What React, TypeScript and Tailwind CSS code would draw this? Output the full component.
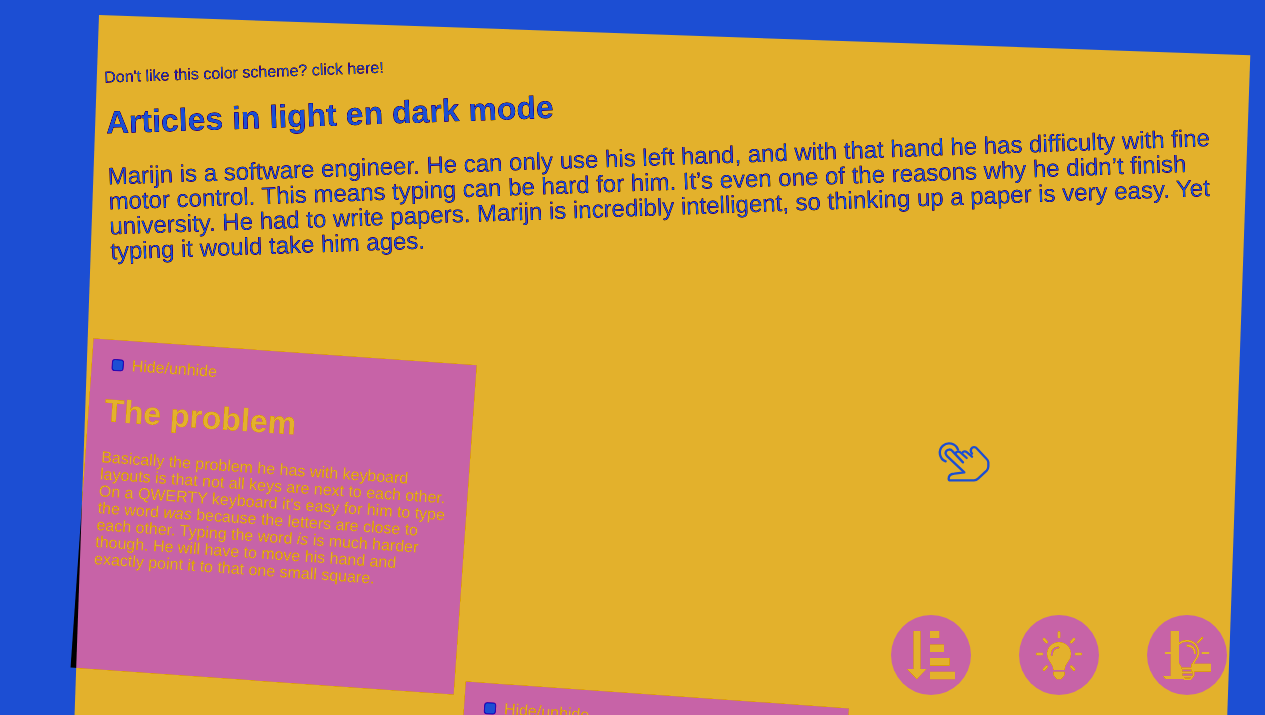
import type { ReactNode } from "react";

function ArticleCard({ title, children, className }: { title: string; children: ReactNode; className: string }) {
  return (
    <article className={`rotate-2 bg-[#1c4ed3] p-4 text-base leading-[17px] text-black mix-blend-difference ${className}`}>
      <label className="flex items-center gap-2 pl-1">
        <input
          type="checkbox"
          className="size-3 appearance-none rounded-[3px] border border-[#bbbbdd] bg-white"
        />
        Hide/unhide
      </label>
      <h2 className="my-[21px] text-[32px] leading-[34px] font-bold">{title}</h2>
      <p>{children}</p>
    </article>
  );
}

function RoundButton({ label, children }: { label: string; children: ReactNode }) {
  return (
    <button type="button" aria-label={label} className="size-20 rounded-full bg-[#1c4ed3] text-black">
      <svg viewBox="0 0 80 80" className="size-full" fill="currentColor" stroke="none">
        {children}
      </svg>
    </button>
  );
}

function HandPointer() {
  return (
    <svg
      viewBox="0 0 270 210"
      className="pointer-events-none fixed top-[430px] left-[920px] h-[70px] w-[90px] text-white mix-blend-difference"
      fill="none"
      stroke="currentColor"
      strokeWidth="7"
      strokeLinecap="round"
      strokeLinejoin="round"
      aria-hidden="true"
    >
      <path d="M77 94A28 28 0 1 1 114 59" />
      <path d="M129 97L98 64C91 56 83 58 79 63C75 68 77 74 82 79L133 127L103 131C91 132 86 138 86 146C86 149 88 151 92 151H162C168 151 171 149 175 145L200 122C204 118 205 114 205 109V97C205 93 203 90 200 87L172 57C166 50 158 50 154 56C151 61 152 66 156 71" />
      <path d="M106 71C109 64 117 63 122 68L140 84" />
      <path d="M127 69C129 63 136 63 141 67L156 80" />
    </svg>
  );
}

export default function App() {
  return (
    <div className="isolate h-screen overflow-hidden bg-[#1c4ed3] pt-[15px] pr-[14px] pl-[99px] font-['Liberation_Sans',Arial,sans-serif]">
      <main className="grid origin-top-left rotate-2 auto-rows-[330px] grid-cols-3 bg-white mix-blend-difference">
        <header className="col-span-3 -rotate-4 px-4 pt-[14px] text-black">
          <a href="#scheme" className="block text-base leading-[17px]">
            Don't like this color scheme? click here!
          </a>
          <h1 className="mt-5 mb-6 text-[32px] leading-[34px] font-bold">Articles in light en dark mode</h1>
          <p className="text-2xl leading-[25px]">
            Marijn is a software engineer. He can only use his left hand, and with that hand he has difficulty with
            fine motor control. This means typing can be hard for him. It’s even one of the reasons why he didn’t
            finish university. He had to write papers. Marijn is incredibly intelligent, so thinking up a paper is
            very easy. Yet typing it would take him ages.
          </p>
        </header>
        <ArticleCard title="The problem" className="col-start-1">
          Basically the problem he has with keyboard layouts is that not all keys are next to each other. On a QWERTY
          keyboard it’s easy for him to type the word <em>was</em> because the letters are close to each other. Typing
          the word <em>is</em> is much harder though. He will have to move his hand and exactly point it to that one
          small square.
        </ArticleCard>
        <ArticleCard title="" className="col-start-2 row-start-3">
          {null}
        </ArticleCard>
      </main>

      <nav className="fixed right-[38px] bottom-5 flex gap-12 mix-blend-difference">
        <RoundButton label="Sort">
          <path d="M22.5 16h7v38h6L25.8 64.3 16 54h6.5z" />
          <path d="M39 16h9.3v7H39zM39 29.5h14v7.5H39zM39 43h19.7v7.7H39zM39 56.7h25v7.6H39z" />
        </RoundButton>
        <RoundButton label="Light">
          <path d="M40 27a12 12 0 0 1 12 12c0 7-6 9-6.3 16H34.3C34 48 28 46 28 39a12 12 0 0 1 12-12z" />
          <path d="M34.3 56.7h11.4v3.3l-3.5 4.3h-4.4L34.3 60z" />
          <path
            d="M40 17.5V22M18.3 39h4.5M57.2 39h4.5M25 24.2l2.7 2.900M55 24.2l-2.7 2.9M25 54.5l2.7-2.9M55 54.5l-2.7-2.9"
            fill="none"
            stroke="currentColor"
            strokeWidth="2.6"
            strokeLinecap="round"
          />
          <path d="M32.8 40c0-4.5 2.5-7.2 6.5-7.5" fill="none" stroke="#1c4ed3" strokeWidth="2" strokeLinecap="round" />
        </RoundButton>
        <RoundButton label="Light or dark">
          <path d="M23.7 16H32v32l2.500 4v9h3v3H18.5L16 61h7.7z" />
          <path d="M44.3 48.7H64v8H44.3z" />
          <g fill="none" stroke="currentColor" strokeWidth="1.8">
            <path d="M31.500 29c5.500-5 14-3.800 18 2 3.500 5.500 2 10.500-1.500 14.500-2 2.300-2.500 4.500-2.500 8" />
            <path d="M34.500 53.500h11.500M34.500 57.500h11M36 61.700h9" />
            <path d="M34.500 54v6.500l3 3.700h6l3-3.700V54" />
            <path d="M39.700 30.500c5 0 8.300 3 8.300 8.500M18 38h6M54.700 38h7.500M50.300 28l5.400-5.700" />
          </g>
        </RoundButton>
      </nav>
      <HandPointer />
    </div>
  );
}
